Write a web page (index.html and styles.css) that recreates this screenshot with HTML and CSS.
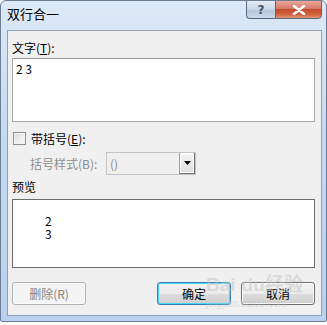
FILE: index.html
```html
<!DOCTYPE html>
<html lang="zh-CN">
<head>
    <meta charset="UTF-8">
    <title>双行合一</title>
    <link rel="stylesheet" href="styles.css">
</head>
<body>

    <!-- Dialog Window -->
    <div class="window">
        <div class="titlebar">
            <span class="title">双行合一</span>
            <div class="caption-buttons">
                <div class="cap-btn help">?</div>
                <div class="cap-btn close">
                    <svg width="14" height="10" viewBox="0 0 14 10">
                        <path d="M2 1 L12 9 M12 1 L2 9" stroke="#fff" stroke-width="2.6" stroke-linecap="round"/>
                    </svg>
                </div>
            </div>
        </div>

        <div class="client">
            <div class="label">文字(<u>T</u>):</div>
            <div class="textbox">2 3</div>

            <div class="check-row">
                <span class="checkbox"></span>
                <span>带括号(<u>E</u>):</span>
            </div>

            <div class="combo-row">
                <span class="disabled-text">括号样式(B):</span>
                <div class="combo">
                    <span class="combo-value">()</span>
                    <span class="combo-btn">
                        <svg width="7" height="4" viewBox="0 0 7 4"><path d="M0 0 H7 L3.5 4 Z" fill="#000"/></svg>
                    </span>
                </div>
            </div>

            <div class="label preview-label">预览</div>
            <div class="preview">
                <div>2</div>
                <div>3</div>
            </div>

            <div class="button-row">
                <button class="btn" disabled>删除(R)</button>
                <div class="right-buttons">
                    <button class="btn default">确定</button>
                    <button class="btn">取消</button>
                </div>
            </div>
        </div>

        <!-- Watermark -->
        <div class="watermark">Bai<span class="paw">du</span>经验<br><small>jingyan.baidu.com</small></div>
    </div>

</body>
</html>
```

FILE: styles.css
```css
/* Global Styles */
body {
    margin: 0;
    padding: 0;
    background: #ffffff;
    font-family: "Noto Sans CJK SC", "Noto Sans", sans-serif;
    font-size: 12px;
    color: #000;
}

u {
    text-decoration: underline;
}

/* Window Frame */
.window {
    position: relative;
    width: 325px;
    height: 320px;
    border: 1px solid #6b7d93;
    border-radius: 6px 6px 2px 2px;
    background: linear-gradient(180deg, #dce9f7 0%, #c6daf1 40%, #b9d1ee 100%);
    box-sizing: content-box;
    overflow: hidden;
}

/* Title Bar */
.titlebar {
    height: 29px;
    display: flex;
    justify-content: space-between;
    align-items: flex-start;
}

.title {
    margin: 5px 0 0 6px;
    font-size: 13px;
    line-height: 16px;
}

.caption-buttons {
    display: flex;
    margin-right: 4px;
    margin-top: -1px;
}

.cap-btn {
    height: 19px;
    display: flex;
    align-items: center;
    justify-content: center;
    border: 1px solid #56687f;
    box-sizing: border-box;
}

.help {
    width: 29px;
    border-radius: 0 0 0 4px;
    border-right: none;
    background: linear-gradient(180deg, #e3ebf4 0%, #c8d6e6 50%, #b5c6da 51%, #c9d8ea 100%);
    color: #44556a;
    font-family: "DejaVu Sans", sans-serif;
    font-weight: bold;
    font-size: 12px;
}

.close {
    width: 47px;
    border-radius: 0 0 4px 0;
    background: linear-gradient(180deg, #e9a899 0%, #d67966 45%, #c44a2f 50%, #d0623f 80%, #e29a77 100%);
}

/* Client Area */
.client {
    margin: 0 4px 0 6px;
    height: 286px;
    border: 1px solid #8ea2ba;
    background: #f0f0f0;
    padding: 10px 6px 0 4px;
    box-sizing: border-box;
}

.label {
    line-height: 14px;
    height: 14px;
}

.textbox {
    margin-top: 3px;
    height: 64px;
    border: 1px solid #a9a9a9;
    border-top-color: #9a9a9a;
    background: #fff;
    padding: 2px 3px;
    box-sizing: border-box;
    line-height: 16px;
}

.check-row {
    margin-top: 8px;
    height: 16px;
    display: flex;
    align-items: center;
    gap: 5px;
    padding-left: 1px;
}

.checkbox {
    width: 11px;
    height: 11px;
    border: 1px solid #8f8f8f;
    background: linear-gradient(135deg, #dcdcdc, #fbfbfb);
    box-shadow: inset 0 0 0 1px #f4f4f4;
}

.combo-row {
    margin-top: 6px;
    height: 23px;
    display: flex;
    align-items: center;
    padding-left: 18px;
}

.disabled-text {
    color: #8d8d8d;
    width: 76px;
}

.combo {
    width: 90px;
    height: 23px;
    border: 1px solid #c4c4c4;
    background: #f0f0f0;
    box-sizing: border-box;
    display: flex;
    justify-content: space-between;
    align-items: center;
}

.combo-value {
    color: #8d8d8d;
    padding-left: 3px;
}

.combo-btn {
    width: 16px;
    height: 21px;
    border-left: 1px solid #9a9a9a;
    background: linear-gradient(180deg, #f6f6f6, #dcdcdc);
    box-shadow: inset 0 0 0 1px #fff;
    display: flex;
    align-items: center;
    justify-content: center;
    border-right: 1px solid #707070;
    border-bottom: 1px solid #707070;
    box-sizing: border-box;
}

.preview-label {
    margin-top: 5px;
}

.preview {
    margin-top: 5px;
    height: 69px;
    border: 1px solid #6c6c6c;
    background: #fff;
    padding: 14px 0 0 32px;
    box-sizing: border-box;
    line-height: 13px;
}

/* Buttons */
.button-row {
    margin-top: 14px;
    display: flex;
    justify-content: space-between;
}

.right-buttons {
    display: flex;
    gap: 10px;
}

.btn {
    width: 74px;
    height: 23px;
    font-family: inherit;
    font-size: 12px;
    border: 1px solid #707070;
    border-radius: 3px;
    background: linear-gradient(180deg, #f2f2f2 0%, #ebebeb 50%, #dddddd 51%, #cfcfcf 100%);
    box-shadow: inset 0 0 0 1px #fcfcfc;
    color: #000;
    padding: 0;
}

.btn:disabled {
    border-color: #adb2b5;
    background: #f4f4f4;
    color: #838383;
}

.btn.default {
    border-color: #3c7fb1;
    box-shadow: inset 0 0 0 1px #48d8fb;
}

/* Watermark overlay */
.watermark {
    position: absolute;
    left: 205px;
    top: 276px;
    color: rgba(200, 200, 200, 0.55);
    font-family: "Liberation Sans", sans-serif;
    font-size: 19px;
    font-weight: bold;
    line-height: 16px;
    pointer-events: none;
}

.watermark small {
    font-size: 10px;
    font-weight: normal;
}

.paw {
    margin-left: 6px;
}
```
